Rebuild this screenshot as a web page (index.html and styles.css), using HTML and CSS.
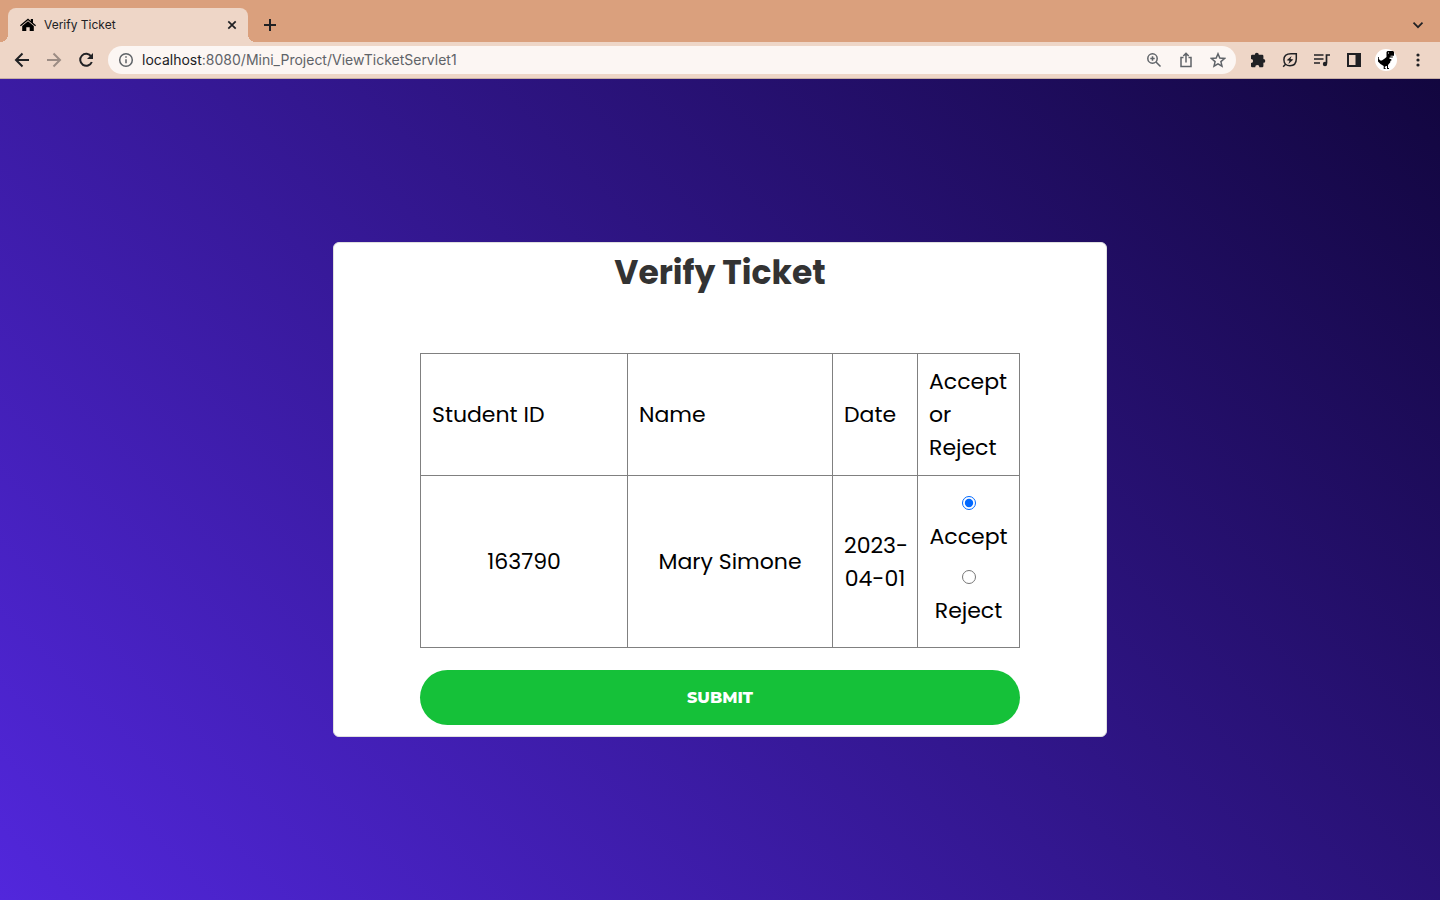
FILE: index.html
```html
<!DOCTYPE html>
<html lang="en">
<head>
<meta charset="utf-8">
<title>Verify Ticket</title>
<link rel="stylesheet" href="styles.css">
</head>
<body>
<header class="browser">
  <div class="tabstrip">
    <div class="tab">
      <svg class="favicon" width="16" height="16" viewBox="0 0 16 16" aria-hidden="true"><path d="M0 8.3 8 1.5l2.8 2.4V2h2.2v3.8L16 8.3l-.8.9L8 3.2.8 9.200z"/><path d="M2.200 9 8 4.200 13.800 9v5H9.700v-3.700H6.300V14H2.200z"/></svg>
      <span class="tab-title">Verify Ticket</span>
      <button class="icon-btn small" aria-label="Close tab"><svg width="16" height="16" viewBox="0 0 16 16" class="line medium"><path d="m4.300 4.300 7.400 7.400m0-7.400-7.400 7.400"/></svg></button>
    </div>
    <button class="icon-btn new-tab" aria-label="New tab"><svg width="16" height="16" viewBox="0 0 16 16" class="line"><path d="M8 2v12M2 8h12"/></svg></button>
    <button class="icon-btn search-tabs" aria-label="Search tabs"><svg width="16" height="16" viewBox="0 0 16 16" class="line medium"><path d="m3.500 5.700 4.500 4.500 4.500-4.500"/></svg></button>
  </div>
  <nav class="toolbar">
    <button class="icon-btn" aria-label="Back"><svg width="20" height="20" viewBox="0 0 20 20" class="line"><path d="M17 10H4m6.500-6.500L4 10l6.500 6.500"/></svg></button>
    <button class="icon-btn faded" aria-label="Forward"><svg width="20" height="20" viewBox="0 0 20 20" class="line"><path d="M3 10h13M9.500 3.500 16 10l-6.500 6.500"/></svg></button>
    <button class="icon-btn" aria-label="Reload"><svg width="20" height="20" viewBox="0 0 20 20" class="line"><path d="M15.200 6.500A6 6 0 1 0 15.800 12"/><path class="solid" d="M17 3v6h-6z"/></svg></button>
    <div class="address">
      <svg width="16" height="16" viewBox="0 0 16 16" class="line thin" aria-hidden="true"><circle cx="8" cy="8" r="6.300"/><path d="M8 7.200v4M8 4.300v1.500"/></svg>
      <span class="url"><span class="host">localhost</span>:8080/Mini_Project/ViewTicketServlet1</span>
      <span class="address-actions">
        <button class="icon-btn small" aria-label="Zoom"><svg width="16" height="16" viewBox="0 0 16 16" class="line thin"><circle cx="6.500" cy="6.500" r="4.700"/><path d="m10 10 4.500 4.500M6.500 4.300v4.400M4.300 6.500h4.400"/></svg></button>
        <button class="icon-btn small" aria-label="Share"><svg width="16" height="16" viewBox="0 0 16 16" class="line thin"><path d="M5.500 5.500H3v9h10v-9h-2.500M8 10.500v-9M5.300 4 8 1.300 10.700 4"/></svg></button>
        <button class="icon-btn small" aria-label="Bookmark"><svg width="16" height="16" viewBox="0 0 16 16" class="line thin"><path d="m8 1.800 1.800 4.300 4.700.4-3.600 3.100 1.100 4.600L8 11.800l-4 2.400 1.100-4.600-3.600-3.100 4.700-.4z"/></svg></button>
      </span>
    </div>
    <div class="extensions">
      <button class="icon-btn small" aria-label="Extensions"><svg width="16" height="16" viewBox="0 0 16 16"><path d="M4.800 2.800a2 2 0 0 1 4 0h3.400a1.200 1.200 0 0 1 1.200 1.200v3a1.900 1.900 0 0 1 0 3.800V14a1.200 1.200 0 0 1-1.200 1.200H9.400a2.100 2.100 0 0 0-4.200 0H2.200A1.200 1.200 0 0 1 1 14v-2.900a2.100 2.100 0 0 0 0-4.200V4a1.200 1.200 0 0 1 1.200-1.200z"/></svg></button>
      <button class="icon-btn small" aria-label="Energy saver"><svg width="16" height="16" viewBox="0 0 16 16" class="line thin"><path d="M14.300 1.700H9C4.500 1.700 1.900 4.200 1.900 7.800c0 3.800 2.700 6 6 6 4 0 6.400-2.700 6.400-7zM1.200 14.800l2.300-2.500"/><path class="solid" d="M9.600 4 4.700 8.300l2.800.5-1.100 3.200 5-4.500-2.900-.5z"/></svg></button>
      <button class="icon-btn small" aria-label="Media controls"><svg width="16" height="16" viewBox="0 0 16 16" class="line medium"><path d="M0 3h9.500M0 7h9.500M0 11h6M12.500 11.500V3H16"/><circle class="solid" cx="11" cy="12" r="2.200"/></svg></button>
      <button class="icon-btn small" aria-label="Side panel"><svg width="16" height="16" viewBox="0 0 16 16"><path fill-rule="evenodd" d="M1 1h14v14H1zm2 2v10h6.500V3z"/></svg></button>
      <button class="icon-btn profile" aria-label="Profile"><svg width="22" height="22" viewBox="0 0 22 22"><path d="M11.500 3 12.500 2h5.500l1 1v3.800h-3.500v.8h2.300v1h-3.300V10h1.800v1.800h-1v1.500l-2.300 2.700v3h1v.9h-2v-3h-.8l-1.400.8v1.500h1v.8H8.700v-3L5.500 15 3 12.500V8h.8v1.900l1.600 1.600h1.500l3.200-2.200L11.500 8z"/><path class="eye" d="M13 3.500h1v1h-1z"/></svg></button>
      <button class="icon-btn small" aria-label="Menu"><svg width="16" height="16" viewBox="0 0 16 16"><circle cx="8" cy="3" r="1.600"/><circle cx="8" cy="8" r="1.600"/><circle cx="8" cy="13" r="1.600"/></svg></button>
    </div>
  </nav>
</header>
<main class="page">
  <form class="card">
    <h1 class="title">Verify Ticket</h1>
    <table class="tickets">
      <colgroup><col><col class="col-name"><col class="col-date"><col class="col-choice"></colgroup>
      <thead><tr><th scope="col">Student ID</th><th scope="col">Name</th><th scope="col">Date</th><th scope="col">Accept or Reject</th></tr></thead>
      <tbody><tr>
        <td>163790</td><td>Mary Simone</td><td>2023-<wbr>04-01</td>
        <td class="choices">
          <label class="choice"><input type="radio" name="status" checked><span>Accept</span></label>
          <label class="choice"><input type="radio" name="status"><span>Reject</span></label>
        </td>
      </tr></tbody>
    </table>
    <button type="button" class="submit">SUBMIT</button>
  </form>
</main>
</body>
</html>
```
FILE: styles.css
```css
* { box-sizing: border-box; }
body {
  margin: 0;
  min-height: 100vh;
  display: flex;
  flex-direction: column;
  font-family: Poppins, Inter, sans-serif;
  color: #000;
}
button { font: inherit; border: 0; padding: 0; background: none; cursor: pointer; }
svg { display: block; fill: currentColor; }
.line { fill: none; stroke: currentColor; stroke-width: 2; }
.medium { stroke-width: 1.7; }
.thin { stroke-width: 1.5; }
.solid { fill: currentColor; stroke: none; }

.browser { font-family: Inter, sans-serif; color: #202124; background: #eed6c7; border-bottom: 1px solid #c5aea4; }
.tabstrip { display: flex; align-items: center; height: 42px; padding: 8px 12px 0 8px; background: #daa07d; }
.tab {
  position: relative;
  display: flex;
  align-items: center;
  gap: 8px;
  width: 240px;
  height: 34px;
  padding: 0 8px 0 12px;
  border-radius: 8px 8px 0 0;
  background: #eed6c7;
}
.tab::before, .tab::after { content: ""; position: absolute; bottom: 0; width: 8px; height: 8px; }
.tab::before { right: 100%; background: radial-gradient(circle at 0 0, transparent 8px, #eed6c7 8px); }
.tab::after { left: 100%; background: radial-gradient(circle at 100% 0, transparent 8px, #eed6c7 8px); }
.favicon { color: #000; }
.tab-title { flex: 1; font-size: 12px; line-height: 16px; }
.icon-btn { display: grid; place-items: center; width: 20px; height: 20px; flex: none; color: #202124; }
.small { width: 16px; height: 16px; }
.new-tab { margin-left: 12px; }
.search-tabs { margin-left: auto; }
.faded { color: #9c8c84; }
.toolbar { display: flex; align-items: center; gap: 12px; height: 36px; padding: 0 14px 0 12px; }
.address {
  flex: 1;
  display: flex;
  align-items: center;
  gap: 8px;
  height: 28px;
  padding: 0 10px;
  border-radius: 14px;
  background: #fcf6f3;
  color: #5f6368;
}
.url { flex: 1; font-size: 14px; line-height: 18px; }
.host { color: #202124; }
.address-actions { display: flex; gap: 16px; }
.address-actions .icon-btn { color: #5f6368; }
.extensions { display: flex; align-items: center; gap: 16px; padding-left: 2px; }
.profile { width: 22px; height: 22px; margin: 0 -3px; border-radius: 50%; background: #fff; color: #000; }
.eye { fill: #fff; }

.page {
  flex: 1;
  display: flex;
  align-items: center;
  justify-content: center;
  background: linear-gradient(45deg, #5227dc, #12063f);
}
.card {
  width: 774px;
  max-width: 100%;
  padding: 5px 86px 11px;
  border: 1px solid #dfdfdf;
  border-radius: 6px;
  background: #fff;
}
.title { margin: 0 0 55px; font-size: 33px; line-height: 50px; font-weight: 700; text-align: center; color: #333; }
.tickets { width: 100%; table-layout: fixed; border-collapse: collapse; font-size: 22px; line-height: 33px; text-align: center; }
.col-name { width: 205px; }
.col-date { width: 85px; }
.col-choice { width: 102px; }
.tickets th, .tickets td { padding: 11px; border: 1px solid #808080; }
.tickets th { font-weight: 400; text-align: left; }
.tickets .choices { padding: 11px 0 12px; }
.choice { display: flex; flex-direction: column; align-items: center; height: 74px; padding-top: 8px; gap: 10px; }
.choice input { width: 14px; height: 14px; margin: 1px 0 0; accent-color: #0068ff; }
.submit {
  display: block;
  width: 100%;
  height: 55px;
  margin-top: 22px;
  border-radius: 28px;
  background: #15c139;
  color: #fff;
  font-family: Montserrat, Inter, sans-serif;
  font-size: 16px;
  font-weight: 800;
}
```
